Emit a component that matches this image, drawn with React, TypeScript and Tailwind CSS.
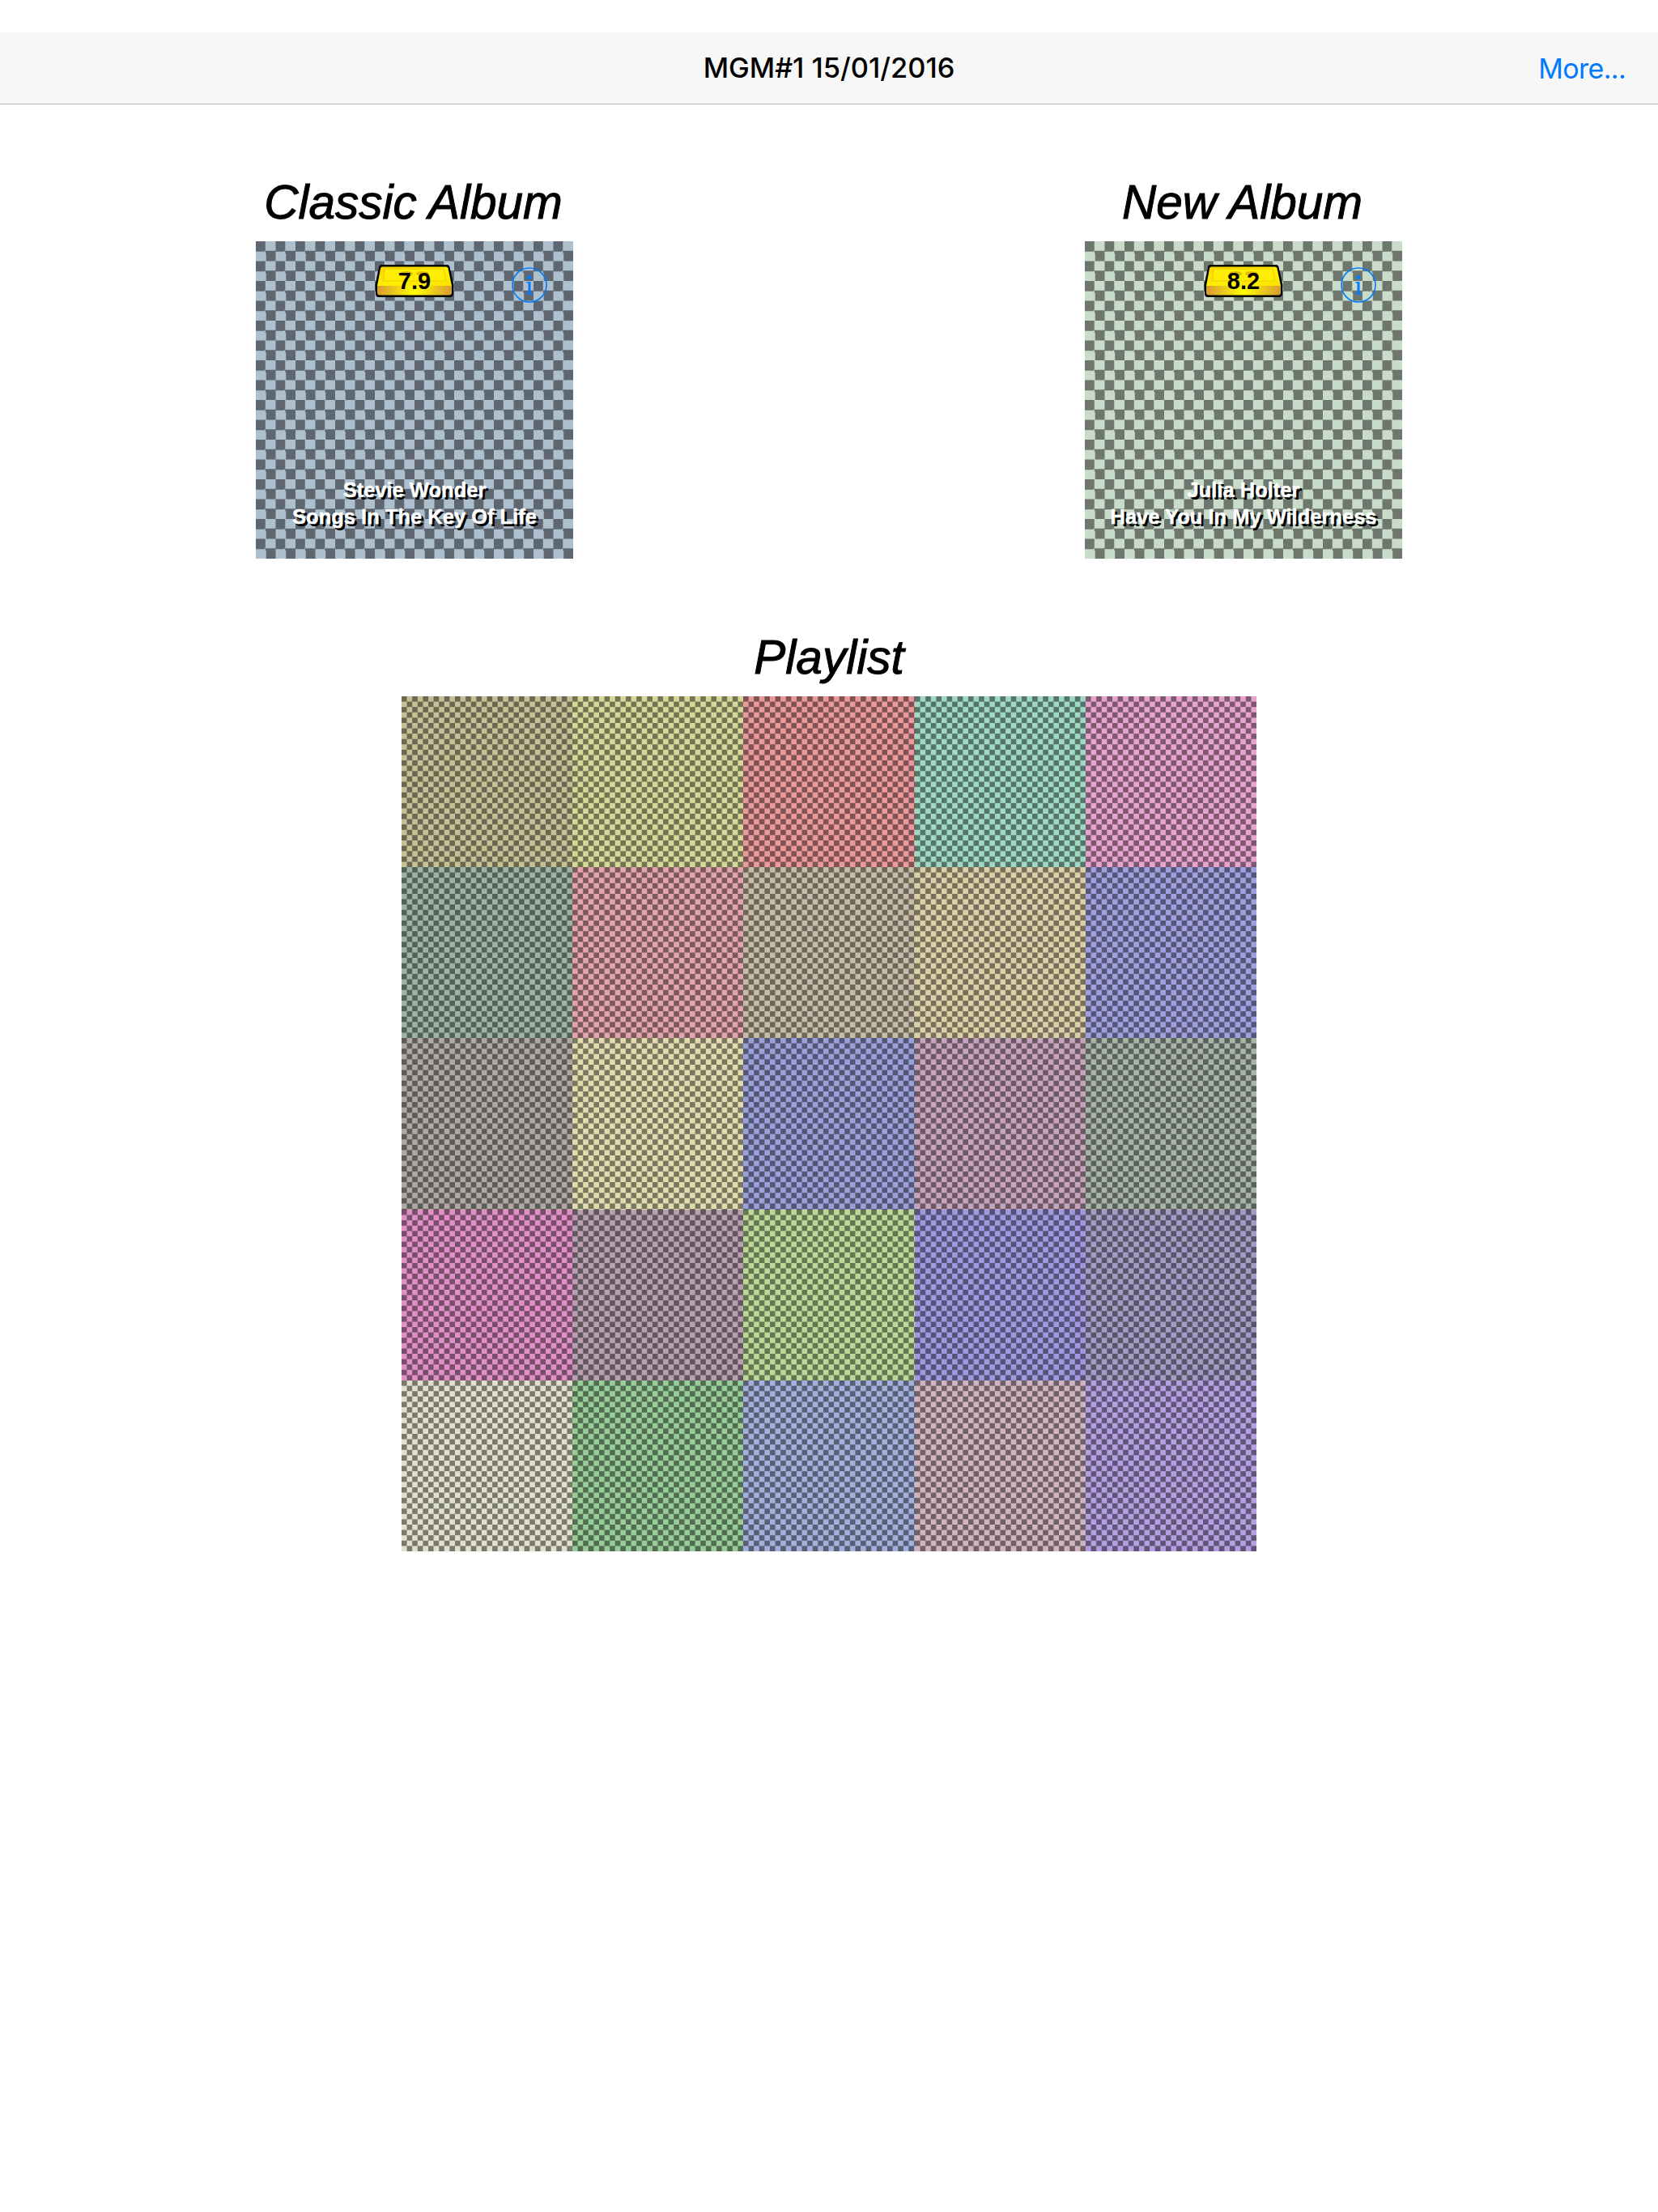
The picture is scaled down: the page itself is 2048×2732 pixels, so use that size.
import React from 'react';

const sans = "font-['Liberation_Sans',Arial,sans-serif]";
const sf = "font-['Inter','Liberation_Sans',sans-serif]";

const albumChecker =
  'bg-[conic-gradient(#0000_25%,#00000075_0_50%,#0000_0_75%,#00000075_0)] bg-[length:24.5px_24.5px] blur-[0.5px]';
const tileChecker =
  'bg-[conic-gradient(#0000_25%,#00000075_0_50%,#0000_0_75%,#00000075_0)] bg-[length:13.2px_13.2px] blur-[0.5px]';
const headingStyle = `whitespace-nowrap text-[58.5px] leading-[96px] italic text-black [-webkit-text-stroke:1px_#000] ${sans}`;

const tiles = [
  'bg-[#c6c096]', 'bg-[#d5d898]', 'bg-[#eb9a9c]', 'bg-[#a0d8c4]', 'bg-[#e8a4d0]',
  'bg-[#9db3a3]', 'bg-[#e4a4ac]', 'bg-[#c8bca8]', 'bg-[#dcd0a8]', 'bg-[#a0a0e0]',
  'bg-[#b0a8a4]', 'bg-[#e0dcb0]', 'bg-[#9ca0d8]', 'bg-[#c8a4bc]', 'bg-[#a8b4a8]',
  'bg-[#e090c4]', 'bg-[#b8a0b0]', 'bg-[#bcd898]', 'bg-[#a098e0]', 'bg-[#a49cc4]',
  'bg-[#e0e0cc]', 'bg-[#98cc98]', 'bg-[#a4b0dc]', 'bg-[#d0b4c0]', 'bg-[#b4a0e0]',
];

const InfoIcon = () => (
  <svg viewBox="0 0 44 44" className="h-11 w-11" fill="none">
    <circle cx="22" cy="22" r="21" stroke="#007aff" strokeWidth="1.6" />
    <circle cx="22" cy="12.500" r="2.500" fill="#007aff" />
    <path d="M18.500 18h5v14h3v1.600h-9V32h3V19.600h-2z" fill="#007aff" />
  </svg>
);

const GoldBar = ({ score, id }: { score: string; id: string }) => (
  <div className="relative h-[42px] w-[98px]">
    <svg viewBox="0 0 98 42" className="absolute inset-0 h-full w-full">
      <defs>
        <linearGradient id={`front-${id}`} x1="0" x2="1" y1="0" y2="0">
          <stop offset="0" stopColor="#d99a35" />
          <stop offset="0.5" stopColor="#ffff00" />
          <stop offset="1" stopColor="#d99a35" />
        </linearGradient>
        <linearGradient id={`top-${id}`} x1="0" x2="1" y1="0" y2="1">
          <stop offset="0" stopColor="#f6d200" />
          <stop offset="0.5" stopColor="#fff000" />
          <stop offset="1" stopColor="#ffe400" />
        </linearGradient>
      </defs>
      <path d="M8 1h81q3 0 3.500 3L97.500 26l-.5 11q0 4-4 4H5q-4 0-4-4L.5 26 5 4q.5-3 3-3z" fill="#000" />
      <path d="M9 3.500h79q2 0 2.500 2L95 27H3L7 5.500q.5-2 2-2z" fill={`url(#top-${id})`} />
      <path d="M3 27h92v8.500q0 3-3 3H6q-3 0-3-3z" fill={`url(#front-${id})`} />
      <path d="M12 6h73l3 15H10z" fill="#ffee00" stroke="#e8c400" strokeWidth="0.8" />
      <ellipse cx="39" cy="12" rx="8" ry="3" fill="#e0bc00" />
      <ellipse cx="59" cy="12" rx="8" ry="3" fill="#e0bc00" />
    </svg>
    <div className={`relative flex h-[44px] items-center justify-center text-[29px] font-bold text-black ${sans}`}>{score}</div>
  </div>
);

const Album = ({ heading, score, artist, title, colour }: { heading: string; score: string; artist: string; title: string; colour: string }) => (
  <div className="flex w-[392px] flex-col items-center">
    <h2 className={`pr-[3px] ${headingStyle}`}>{heading}</h2>
    <div className={`relative h-[392px] w-[392px] overflow-hidden ${colour}`}>
      <div className={`absolute inset-0 ${albumChecker}`} />
      <div className="relative flex h-full w-full flex-col items-center justify-between pt-7 pb-[35px]">
        <GoldBar score={score} id={score} />
        <div className={`text-center text-[25.5px] leading-[33px] font-bold whitespace-nowrap text-white [-webkit-text-stroke:0.4px_#fff] [text-shadow:3px_3px_0_#000] ${sans}`}>
          <div>{artist}</div>
          <div>{title}</div>
        </div>
      </div>
      <div className="absolute top-[32px] right-[32px]">
        <InfoIcon />
      </div>
    </div>
  </div>
);

export default function App() {
  return (
    <div className="min-h-[2732px] bg-white">
      <div className="h-10" />
      <nav className="grid h-[89px] grid-cols-[1fr_auto_1fr] items-center border-b border-[#b2b2b2] bg-[#f7f7f7] px-10">
        <div />
        <div className={`text-[34.4px] font-medium text-black ${sf}`}>MGM#1 15/01/2016</div>
        <div className={`text-right text-[34px] tracking-[-0.7px] text-[#007aff] ${sf}`}>More...</div>
      </nav>
      <main className="flex flex-col items-center pt-[73px]">
        <div className="flex w-full justify-between px-[316px]">
          <Album heading="Classic Album" score="7.9" artist="Stevie Wonder" title="Songs In The Key Of Life" colour="bg-[#aebfce]" />
          <Album heading="New Album" score="8.2" artist="Julia Holter" title="Have You In My Wilderness" colour="bg-[#c9dcc9]" />
        </div>
        <h2 className={`mt-[74px] ${headingStyle}`}>Playlist</h2>
        <div className="grid w-[1056px] grid-cols-5">
          {tiles.map((t, i) => (
            <div key={i} className={`h-[211.2px] overflow-hidden ${t}`}>
              <div className={`h-full w-full ${tileChecker}`} />
            </div>
          ))}
        </div>
      </main>
    </div>
  );
}
